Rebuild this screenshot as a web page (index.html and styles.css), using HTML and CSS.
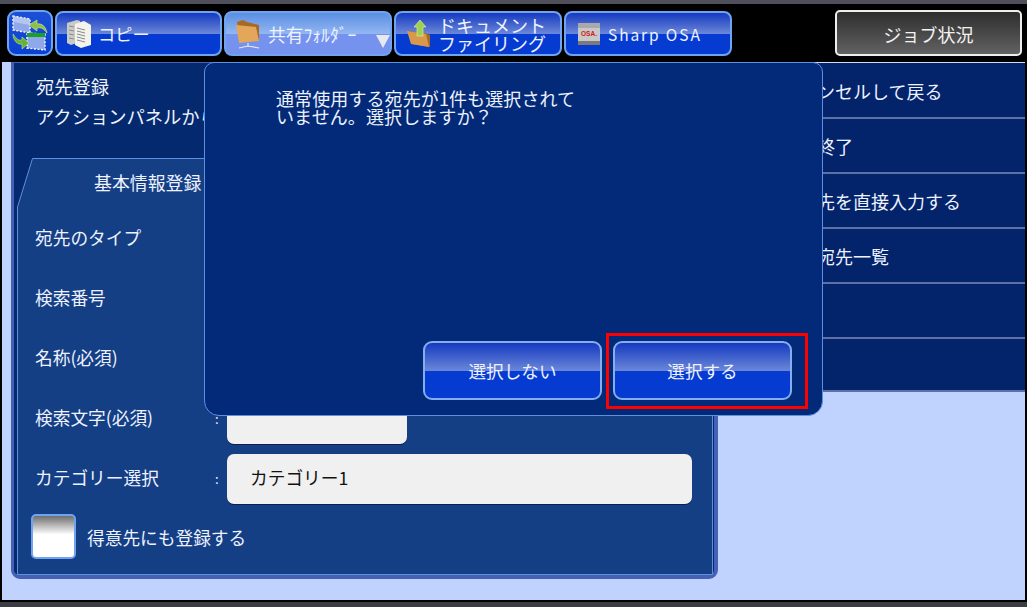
FILE: index.html
```html
<!DOCTYPE html>
<html lang="ja">
<head>
<meta charset="utf-8">
<title>宛先登録</title>
<link rel="stylesheet" href="styles.css">
</head>
<body>
<div class="topstrip"></div>
<header class="toolbar">
  <button class="tbtn home" aria-label="ホーム">
    <svg viewBox="0 0 36 36" width="36" height="36">
      <path d="M1 1l17 3v14L1 15z" fill="#8fa8e8" stroke="#fff" stroke-width="1.4" stroke-dasharray="2 1.6"/>
      <path d="M1 1l17 3v6L1 7z" fill="#c4d2f2" opacity=".7"/>
      <path d="M15 18l18 1v16l-18-2z" fill="#8fa8e8" stroke="#fff" stroke-width="1.4" stroke-dasharray="2 1.6"/>
      <path d="M15 18h18v4H15z" fill="#18a028"/>
      <path d="M35 18C34 11 29 8 25 9V5l-8 5 8 6v-3c4-1 7 1 10 5z" fill="#8cc048" stroke="#dfe8a0" stroke-width=".6"/>
      <path d="M1 19c0 7 5 11 9 10v5l7-6-7-6v3c-4 1-6-2-9-6z" fill="#62b432" stroke="#d0e090" stroke-width=".6"/>
    </svg>
  </button>
  <button class="tbtn app">
    <svg class="ico" viewBox="0 0 24 28" width="24" height="28">
      <path d="M0 3l10-3 3 1v21l-9 3-4-2z" fill="#c9cbc6"/>
      <path d="M8 4l9-3 7 4v20l-10 3-6-3z" fill="#f3f3ee"/>
      <path d="M10 8l8 2M10 11l8 2M10 14l8 2M10 17l8 2M10 20l8 2" stroke="#888" stroke-width="1"/>
      <path d="M2 6l5 1M2 10l5 1M2 14l5 1M2 18l5 1" stroke="#8b8b8b" stroke-width="1"/>
    </svg>
    <span class="wide">コピー</span>
  </button>
  <button class="tbtn app active">
    <svg class="ico" viewBox="0 0 24 30" width="24" height="30">
      <path d="M1 3l6-2 4 2 12 3v15L3 22z" fill="#a86a22"/>
      <path d="M0 6l20 2 3 14L3 24z" fill="#e3a75c"/>
      <path d="M12 24v4M3 29l9-2 11 2" stroke="#e8e8e8" stroke-width="1.2" fill="none"/>
    </svg>
    <span>共有ﾌｫﾙﾀﾞｰ</span>
    <svg class="caret" viewBox="0 0 14 13" width="14" height="13"><path d="M0 0h14L7 13z" fill="#e8e8f0"/></svg>
  </button>
  <button class="tbtn app">
    <svg class="ico" viewBox="0 0 26 27" width="26" height="27">
      <path d="M2 11l17 2 5 2v12L6 24z" fill="#a86a22"/>
      <path d="M1 11l19 3 3 13L5 24z" fill="#d8994d"/>
      <path d="M14 0l6 7h-3v9h-6V7H8z" fill="#9fd24a" stroke="#e6f0b0" stroke-width=".6"/>
    </svg>
    <span class="two">ドキュメント<br>ファイリング</span>
  </button>
  <button class="tbtn app">
    <svg class="ico osa" viewBox="0 0 22 22" width="22" height="22">
      <rect width="22" height="22" fill="#c8c8c8"/>
      <path d="M0 0h22v5H0z" fill="#a9a9a9"/>
      <rect y="18" width="22" height="4" fill="#7a7a7a"/>
      <text x="11" y="13" class="osatext">OSA.</text>
    </svg>
    <span class="latin">Sharp OSA</span>
  </button>
  <button class="job">ジョブ状況</button>
</header>

<main class="main">
  <section class="panel">
    <p class="lead">宛先登録<br>アクションパネルから宛先を登録してください</p>
    <div class="tab">
      <svg class="tabshape" viewBox="0 0 696 417" preserveAspectRatio="none">
        <path d="M15.5 .5H695.5V416.5H.5V49z" fill="#143f85" stroke="#5f90e0"/>
      </svg>
      <div class="tabtitle">基本情報登録</div>
      <div class="row"><span class="lbl">宛先のタイプ</span><span class="colon">:</span><span class="field wide-f">メール</span></div>
      <div class="row"><span class="lbl">検索番号</span><span class="colon">:</span><span class="field short-f">1</span></div>
      <div class="row"><span class="lbl">名称(必須)</span><span class="colon">:</span><span class="field wide-f"></span></div>
      <div class="row"><span class="lbl">検索文字(必須)</span><span class="colon">:</span><span class="field short-f"></span></div>
      <div class="row"><span class="lbl">カテゴリー選択</span><span class="colon">:</span><span class="field wide-f">カテゴリー1</span></div>
      <label class="check"><span class="box"></span>得意先にも登録する</label>
    </div>
  </section>

  <nav class="menu">
    <a>キャンセルして戻る</a>
    <a>登録終了</a>
    <a>送信先を直接入力する</a>
    <a>登録宛先一覧</a>
    <a></a>
    <a></a>
  </nav>

  <div class="dialog">
    <p class="msg">通常使用する宛先が1件も選択されて<br>いません。選択しますか？</p>
    <div class="actions">
      <button class="dbtn">選択しない</button>
      <button class="dbtn">選択する</button>
    </div>
    <div class="highlight"></div>
  </div>
</main>
<div class="bottomstrip"></div>
</body>
</html>
```
FILE: styles.css
```css
* { box-sizing: border-box; }
html, body { margin: 0; height: 607px; overflow: hidden; }
body {
  background: #000;
  color: #eef2ff;
  font-family: "Noto Sans CJK JP", "Noto Sans", sans-serif;
  font-size: 17.7px;
}
button { font: inherit; color: inherit; padding: 0; cursor: default; }
p { margin: 0; }

.topstrip { height: 4px; background: #50505c; }

.toolbar {
  height: 58px;
  display: flex;
  align-items: flex-start;
  gap: 2px;
  padding: 7px 5px 0 7px;
}
.tbtn {
  position: relative;
  height: 45px;
  border: 2px solid #6ea4f0;
  border-radius: 8px;
  background: linear-gradient(#153ac0 0, #6a86d8 50%, #063bd2 50%, #063bd2 100%);
  display: flex;
  align-items: center;
  text-align: left;
}
.home { width: 46px; height: 46px; margin-top: -1px; padding-left: 3px; border-radius: 9px; background: linear-gradient(#1c50d6, #0a40d2); }
.app { width: 168px; padding-left: 10px; line-height: 18px; }
.app:nth-child(2) { width: 167px; }
.ico { flex: none; margin-right: 7px; }
.osa { margin: 0 9px 0 2px; }
.osatext { font: 700 6.5px "Liberation Sans", sans-serif; fill: #d01818; text-anchor: middle; }
.wide { font-size: 17.2px; }
.two { margin-left: -1px; font-size: 18px; }
.latin { font-size: 15.5px; letter-spacing: 1.9px; margin-left: -1px; }
.active { background: linear-gradient(#5a8ee2 0, #92b6f2 50%, #7592ee 50%, #7592ee 100%); }
.active span { margin-left: 1px; }
.caret { position: absolute; right: 0; bottom: 6px; }

.job {
  margin-left: auto;
  margin-top: -1px;
  width: 187px;
  height: 46px;
  border: 2px solid #eee;
  border-radius: 5px;
  background: linear-gradient(#2e2e2e, #626262);
  color: #f2f2f2;
  font-size: 18px;
  padding-top: 1px;
}

.main {
  position: relative;
  height: 538px;
  margin: 0 2px;
  background: #c0d3ff;
  display: flex;
  align-items: flex-start;
  padding-left: 9px;
}

.panel {
  width: 707px;
  height: 517px;
  flex: none;
  background: #04296f;
  border: solid #4560b4;
  border-width: 1px 4px 4px 3px;
  border-radius: 0 0 9px 9px;
  padding: 8px 0 0 22px;
}
.lead { line-height: 30px; white-space: nowrap; overflow: hidden; font-size: 18.3px; }

.tab {
  position: relative;
  width: 696px;
  height: 417px;
  margin: 27px 0 0 -19px;
}
.tabshape { position: absolute; inset: 0; width: 100%; height: 100%; }
.tabtitle, .row, .check { position: relative; }
.tabtitle { height: 50px; line-height: 48px; padding-left: 77px; font-size: 17.9px; }
.row { height: 60px; display: flex; align-items: center; padding: 0 0 0 18px; }
.lbl { width: 175px; margin-top: -2px; }
.colon { width: 17px; padding-left: 5px; font-size: 13px; }
.field {
  height: 50px;
  margin-top: 2px;
  background: #f0f0f0;
  border-radius: 7px;
  color: #111;
  line-height: 47px;
  padding-left: 23px;
  box-shadow: 0 1px 0 #0b1f50;
}
.wide-f { width: 465px; }
.short-f { width: 180px; }

.check {
  display: flex;
  align-items: center;
  gap: 11px;
  margin: 6px 0 0 14px;
  font-size: 17.7px;
}
.box {
  width: 45px;
  height: 45px;
  border: 2px solid #6ea4f0;
  border-radius: 5px;
  background: linear-gradient(#6e6e6e, #fff 45%);
}

.menu {
  flex: 1;
  height: 330px;
  margin-left: 23px;
  border-top: 1px solid #cfdcf5;
  background: #03246b;
  display: flex;
  flex-direction: column;
}
.menu a {
  height: 55px;
  padding-left: 40px;
  line-height: 54px;
  border-bottom: 2px solid #5c71a8;
  white-space: nowrap;
  font-size: 18px;
}
.menu a:first-child { height: 56px; line-height: 56px; }
.menu a:last-child { height: 54px; }

.dialog {
  position: absolute;
  left: 202px;
  top: 0;
  width: 619px;
  height: 354px;
  background: #032a78;
  border: 1px solid #5f90e0;
  border-radius: 10px 10px 15px 15px;
  display: flex;
  flex-direction: column;
  padding: 26px 30px 15px 71px;
  font-size: 18px;
}
.msg { line-height: 18px; letter-spacing: .1px; }
.actions { margin-top: auto; display: flex; justify-content: flex-end; gap: 11px; }
.dbtn {
  width: 179px;
  height: 59px;
  border: 2px solid #84aef0;
  border-radius: 9px;
  background: linear-gradient(#153ac0 0, #6a86d8 50%, #063bd2 50%, #063bd2 100%);
  font-size: 17.6px;
}
.highlight {
  position: absolute;
  left: 401px;
  top: 270px;
  width: 202px;
  height: 76px;
  border: 3px solid #f00;
}

.bottomstrip { height: 7px; border-top: 2px solid #000; background: #3c3c44; }
```
